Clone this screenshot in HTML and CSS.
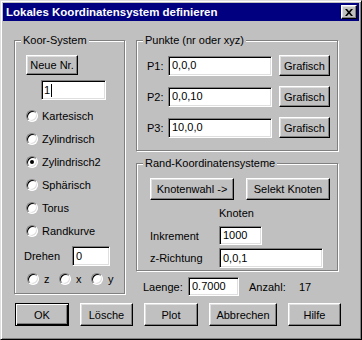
FILE: index.html
```html
<!DOCTYPE html>
<html lang="de">
<head>
  <meta charset="UTF-8">
  <title>Lokales Koordinatensystem definieren</title>
  <link rel="stylesheet" href="styles.css">
</head>
<body>
  <div class="window">
    <div class="titlebar">
      <span class="title">Lokales Koordinatensystem definieren</span>
      <span class="close">
        <svg width="8" height="7" viewBox="0 0 8 7"><path d="M0 0H2L4 2.3L6 0H8L5.1 3.5L8 7H6L4 4.7L2 7H0L2.9 3.5Z" fill="#000"/></svg>
      </span>
    </div>

    <div class="content">
      <div class="main">
        <!-- linke Gruppe -->
        <div class="group koor">
          <div class="group-title">Koor-System</div>
          <button class="btn btn-neue">Neue Nr.</button>
          <div class="field field-nr">1<span class="caret"></span></div>
          <div class="radio-list">
            <div class="radio-row"><span class="radio"></span>Kartesisch</div>
            <div class="radio-row"><span class="radio"></span>Zylindrisch</div>
            <div class="radio-row"><span class="radio checked"></span>Zylindrisch2</div>
            <div class="radio-row"><span class="radio"></span>Sphärisch</div>
            <div class="radio-row"><span class="radio"></span>Torus</div>
            <div class="radio-row"><span class="radio"></span>Randkurve</div>
          </div>
          <div class="drehen-row">
            <span class="drehen-label">Drehen</span>
            <div class="field field-drehen">0</div>
          </div>
          <div class="axis-row">
            <div class="axis-item"><span class="radio"></span>z</div>
            <div class="axis-item"><span class="radio"></span>x</div>
            <div class="axis-item"><span class="radio"></span>y</div>
          </div>
        </div>

        <div class="right-col">
          <div class="group punkte">
            <div class="group-title">Punkte (nr oder xyz)</div>
            <div class="p-row">
              <span class="p-label">P1:</span>
              <div class="field field-p">0,0,0</div>
              <button class="btn btn-grafisch">Grafisch</button>
            </div>
            <div class="p-row">
              <span class="p-label">P2:</span>
              <div class="field field-p">0,0,10</div>
              <button class="btn btn-grafisch">Grafisch</button>
            </div>
            <div class="p-row">
              <span class="p-label">P3:</span>
              <div class="field field-p">10,0,0</div>
              <button class="btn btn-grafisch">Grafisch</button>
            </div>
          </div>

          <div class="group rand">
            <div class="group-title">Rand-Koordinatensysteme</div>
            <div class="rand-buttons">
              <button class="btn btn-knoten">Knotenwahl -&gt;</button>
              <button class="btn btn-knoten">Selekt Knoten</button>
            </div>
            <div class="knoten-head">Knoten</div>
            <div class="rand-row">
              <span class="rand-label">Inkrement</span>
              <div class="field field-ink">1000</div>
            </div>
            <div class="rand-row rand-row-z">
              <span class="rand-label">z-Richtung</span>
              <div class="field field-z">0,0,1</div>
            </div>
          </div>

          <div class="laenge-row">
            <span class="laenge-label">Laenge:</span>
            <div class="field field-laenge">0.7000</div>
            <span class="anzahl-label">Anzahl:</span>
            <span>17</span>
          </div>
        </div>
      </div>

      <div class="buttons">
        <button class="btn btn-default btn-ok">OK</button>
        <button class="btn btn-loesche">Lösche</button>
        <button class="btn btn-plot">Plot</button>
        <button class="btn btn-abbr">Abbrechen</button>
        <button class="btn btn-hilfe">Hilfe</button>
      </div>
    </div>
  </div>
</body>
</html>
```

FILE: styles.css
```css
body {
  margin: 0;
  background: #c0c0c0;
  font-family: "Liberation Sans", Arial, sans-serif;
  font-size: 11px;
  color: #000;
}

.window {
  width: 362px;
  height: 340px;
  box-sizing: border-box;
  background: #c0c0c0;
  border: 1px solid;
  border-color: #dfdfdf #000 #000 #dfdfdf;
  box-shadow: inset 1px 1px 0 #fff, inset -1px -1px 0 #808080;
  padding: 2px;
}

.titlebar {
  height: 18px;
  background: #000080;
  color: #fff;
  display: flex;
  align-items: center;
  justify-content: space-between;
  padding: 0 2px 0 3px;
}
.title {
  font-weight: bold;
  font-size: 11.5px;
}
.close {
  width: 16px;
  height: 14px;
  box-sizing: border-box;
  background: #c0c0c0;
  border: 1px solid;
  border-color: #fff #000 #000 #fff;
  box-shadow: inset -1px -1px 0 #808080, inset 1px 1px 0 #dfdfdf;
  display: flex;
  align-items: center;
  justify-content: center;
}

.content {
  padding: 19px 0 0 11px;
}
.main {
  display: flex;
  align-items: flex-start;
  gap: 11px;
}

/* Gruppenrahmen (geaetzt) */
.group {
  position: relative;
  box-sizing: border-box;
  border: 1px solid #808080;
  box-shadow: 1px 1px 0 #fff, inset 1px 1px 0 #fff;
}
.group-title {
  position: absolute;
  top: -7px;
  left: 6px;
  background: #c0c0c0;
  padding: 0 2px;
  line-height: 13px;
  white-space: nowrap;
}

.btn {
  font-family: inherit;
  font-size: 11px;
  color: #000;
  background: #c0c0c0;
  border: 1px solid;
  border-color: #fff #000 #000 #fff;
  box-shadow: inset -1px -1px 0 #808080, inset 1px 1px 0 #dfdfdf;
  padding: 0;
  box-sizing: border-box;
  display: flex;
  align-items: center;
  justify-content: center;
  white-space: nowrap;
}
.btn-default {
  border-color: #000;
  box-shadow: inset 1px 1px 0 #fff, inset -1px -1px 0 #000, inset -2px -2px 0 #808080;
}

.field {
  box-sizing: border-box;
  background: #fff;
  border: 1px solid;
  border-color: #808080 #fff #fff #808080;
  box-shadow: inset 1px 1px 0 #000, inset -1px -1px 0 #dfdfdf;
  padding-left: 3px;
  display: flex;
  align-items: center;
  line-height: 13px;
}
.caret {
  width: 1px;
  height: 13px;
  background: #000;
  margin-left: 1px;
}

.radio {
  width: 12px;
  height: 12px;
  box-sizing: border-box;
  border-radius: 50%;
  background: #fff;
  border: 1px solid;
  border-color: #808080 #fff #fff #808080;
  box-shadow: inset 1px 1px 0 #000, inset -1px -1px 0 #dfdfdf;
  display: flex;
  align-items: center;
  justify-content: center;
  flex: none;
}
.radio.checked::after {
  content: "";
  width: 4px;
  height: 4px;
  border-radius: 50%;
  background: #000;
}

/* Koor-System */
.koor {
  width: 111px;
  height: 254px;
  display: flex;
  flex-direction: column;
}
.btn-neue {
  width: 52px;
  height: 20px;
  margin: 14px 0 0 11px;
}
.field-nr {
  width: 65px;
  height: 20px;
  margin: 5px 0 0 26px;
  padding-left: 2px;
}
.radio-list {
  margin-top: 4px;
}
.radio-row {
  height: 23px;
  display: flex;
  align-items: center;
  gap: 4px;
  padding-left: 11px;
}
.drehen-row {
  display: flex;
  align-items: center;
  margin-top: 4px;
  padding-left: 9px;
}
.drehen-label {
  width: 48px;
}
.field-drehen {
  width: 38px;
  height: 20px;
}
.axis-row {
  display: flex;
  align-items: center;
  height: 20px;
  margin-top: 3px;
  padding-left: 12px;
}
.axis-item {
  width: 32px;
  display: flex;
  align-items: center;
  gap: 5px;
}

/* rechte Spalte */
.right-col {
  width: 202px;
  display: flex;
  flex-direction: column;
}
.punkte {
  height: 111px;
  padding: 14px 0 0 10px;
  display: flex;
  flex-direction: column;
  gap: 10px;
}
.p-row {
  display: flex;
  align-items: center;
  height: 21px;
}
.p-label {
  width: 21px;
}
.field-p {
  width: 104px;
  height: 20px;
}
.btn-grafisch {
  width: 51px;
  height: 21px;
  margin-left: 7px;
}

.rand {
  height: 108px;
  margin-top: 12px;
  padding: 14px 0 0 13px;
}
.rand-buttons {
  display: flex;
  gap: 12px;
}
.btn-knoten {
  width: 84px;
  height: 22px;
}
.knoten-head {
  margin: 7px 0 0 69px;
  line-height: 13px;
}
.rand-row {
  display: flex;
  align-items: center;
  margin-top: 6px;
}
.rand-row-z {
  margin-top: 3px;
}
.rand-label {
  width: 69px;
}
.field-ink {
  width: 43px;
  height: 19px;
}
.field-z {
  width: 104px;
  height: 20px;
}

.laenge-row {
  display: flex;
  align-items: center;
  margin-top: 6px;
  padding-left: 7px;
}
.laenge-label {
  width: 45px;
}
.field-laenge {
  width: 51px;
  height: 19px;
}
.anzahl-label {
  width: 50px;
  margin-left: 10px;
}

/* untere Knopfleiste */
.buttons {
  display: flex;
  gap: 11px;
  margin-top: 7px;
  padding-left: 1px;
}
.buttons .btn {
  height: 23px;
}
.btn-ok { width: 54px; }
.btn-loesche { width: 53px; }
.btn-plot { width: 54px; }
.btn-abbr { width: 68px; }
.btn-hilfe { width: 53px; }
```
